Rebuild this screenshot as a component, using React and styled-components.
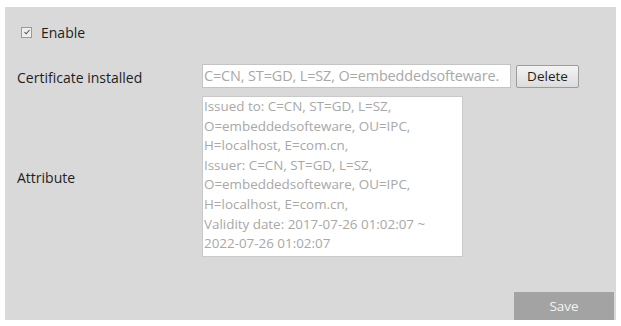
import React from 'react';
import styled, { createGlobalStyle } from 'styled-components';

const GlobalStyle = createGlobalStyle`
  html, body {
    margin: 0;
    padding: 0;
    background: #ffffff;
    font-family: "Open Sans", "Noto Sans", sans-serif;
  }
`;

const ATTRIBUTE_TEXT = [
  'Issued to: C=CN, ST=GD, L=SZ,',
  'O=embeddedsofteware, OU=IPC,',
  'H=localhost, E=com.cn,',
  'Issuer: C=CN, ST=GD, L=SZ,',
  'O=embeddedsofteware, OU=IPC,',
  'H=localhost, E=com.cn,',
  'Validity date: 2017-07-26 01:02:07 ~',
  '2022-07-26 01:02:07',
];

const App = () => {
  return (
    <Page>
      <GlobalStyle />
      <Panel>
        <EnableRow>
          <CheckBox>
            <svg width="8" height="8" viewBox="0 0 8 8">
              <path d="M1.5 4.2 L3.2 5.8 L6.5 2" fill="none" stroke="#555" strokeWidth="1.1" />
            </svg>
          </CheckBox>
          <EnableLabel>Enable</EnableLabel>
        </EnableRow>

        <FormGrid>
          <Label>Certificate installed</Label>
          <InputRow>
            <TextInput>C=CN, ST=GD, L=SZ, O=embeddedsofteware.</TextInput>
            <DeleteButton>Delete</DeleteButton>
          </InputRow>

          <Label>Attribute</Label>
          <TextArea>
            {ATTRIBUTE_TEXT.map((line, i) => (
              <div key={i}>{line}</div>
            ))}
          </TextArea>
        </FormGrid>

        <Footer>
          <SaveButton>Save</SaveButton>
        </Footer>
      </Panel>
    </Page>
  );
};

const Page = styled.div`
  padding: 7px 5px 6px 5px;
`;

const Panel = styled.div`
  width: 611px;
  height: 313px;
  box-sizing: border-box;
  background-color: #d9d9d9;
  padding: 0 2px 0 12px;
  display: flex;
  flex-direction: column;
`;

const EnableRow = styled.div`
  display: flex;
  align-items: center;
  margin: 19px 0 0 4px;
  height: 12px;
`;

const CheckBox = styled.span`
  width: 9px;
  height: 9px;
  border: 1px solid #9a9a9a;
  background: #eeeeee;
  display: flex;
  align-items: center;
  justify-content: center;
`;

const EnableLabel = styled.span`
  margin-left: 9px;
  font-size: 14px;
  color: #1e1e1e;
`;

const FormGrid = styled.div`
  display: grid;
  grid-template-columns: 185px 1fr;
  row-gap: 8px;
  align-items: center;
  margin-top: 26px;
`;

const Label = styled.div`
  font-size: 14px;
  color: #1e1e1e;
  padding-top: 2px;
`;

const InputRow = styled.div`
  display: flex;
  align-items: center;
  gap: 5px;
`;

const TextInput = styled.div`
  width: 309px;
  height: 24px;
  box-sizing: border-box;
  background: #ffffff;
  border: 1px solid #c4c4c4;
  font-size: 14.4px;
  line-height: 22px;
  letter-spacing: -0.1px;
  color: #a8a8a8;
  padding-left: 1px;
  white-space: nowrap;
  overflow: hidden;
`;

const DeleteButton = styled.div`
  width: 63px;
  height: 23px;
  box-sizing: border-box;
  border: 1px solid #9c9c9c;
  border-radius: 2px;
  background: linear-gradient(#f4f4f4, #dcdcdc);
  font-size: 13.5px;
  line-height: 21px;
  text-align: center;
  color: #1e1e1e;
`;

const TextArea = styled.div`
  width: 261px;
  height: 161px;
  box-sizing: border-box;
  background: #ffffff;
  border: 1px solid #c9c9c9;
  padding: 0 0 0 1px;
  font-size: 13.4px;
  line-height: 19.6px;
  color: #a8a8a8;
  white-space: nowrap;
  overflow: hidden;
`;

const Footer = styled.div`
  margin-top: auto;
  display: flex;
  justify-content: flex-end;
`;

const SaveButton = styled.div`
  width: 100px;
  height: 28px;
  background-color: #a3a3a3;
  color: #f4f4f4;
  font-size: 13.5px;
  line-height: 28px;
  text-align: center;
`;

export default App;
